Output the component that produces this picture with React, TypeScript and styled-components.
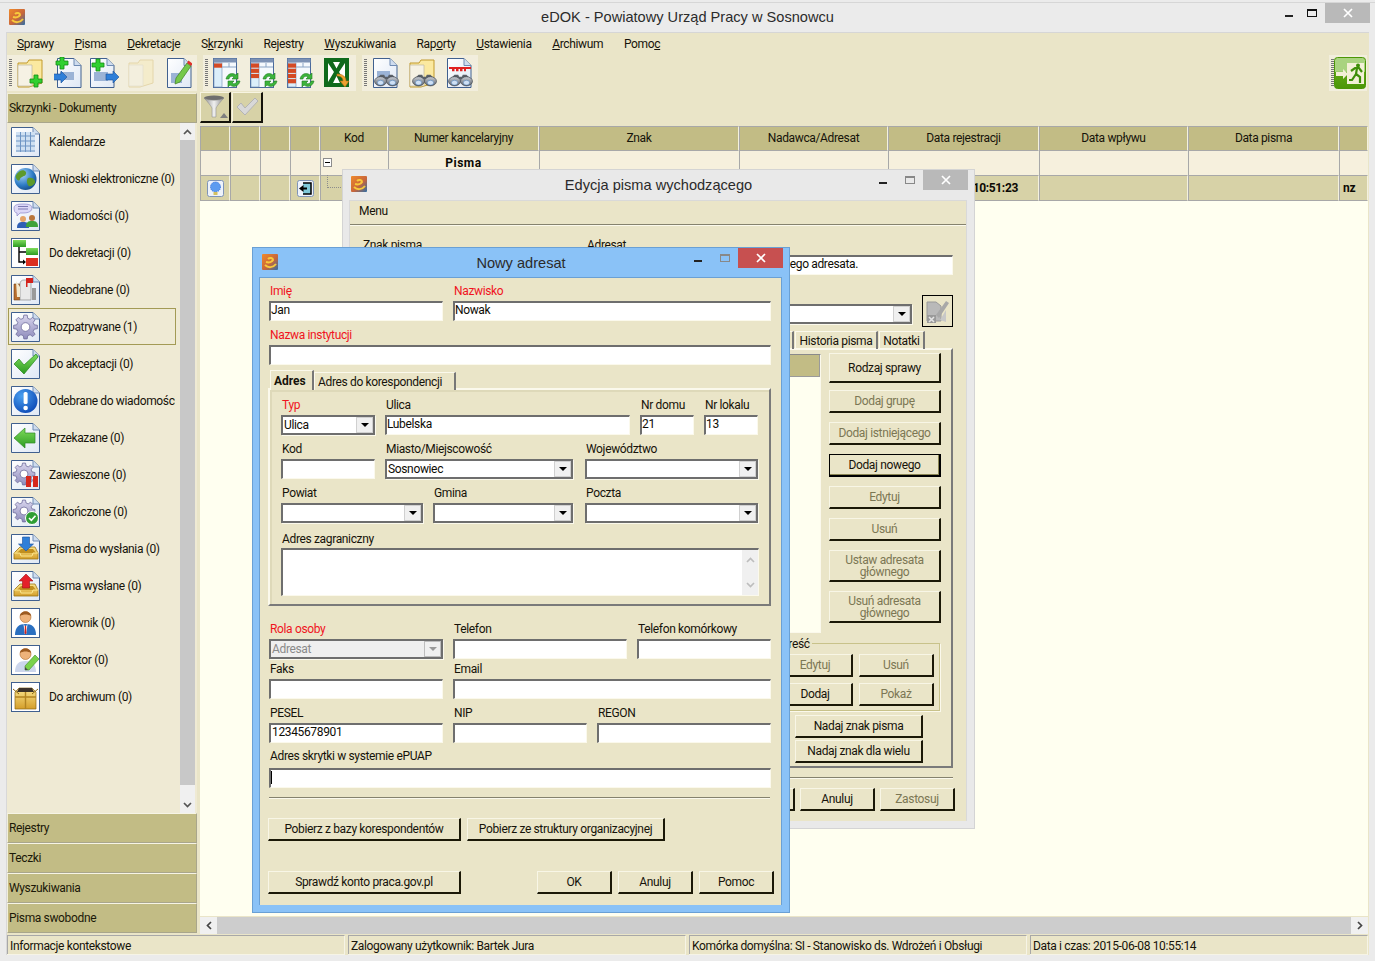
import React from "react";
import styled, { createGlobalStyle, css } from "styled-components";

const Global = createGlobalStyle`
  html, body { margin: 0; padding: 0; background: #ebebeb; overflow: hidden; }
  body { font-family: Roboto, "Liberation Sans", Arial, sans-serif; font-size: 12px; letter-spacing: -0.35px; color: #16130a; }
  * { box-sizing: border-box; }
`;

const gold = "#c2bc85";
const sand = "#eae5c8";

/* ---------- drawing helpers ---------- */
const gearPath = (cx: number, cy: number, R: number, r: number, n: number) => {
  let d = "";
  const st = (Math.PI * 2) / n;
  for (let i = 0; i < n; i++) {
    const a = i * st;
    const pts = [
      [r, a - st * 0.32], [R, a - st * 0.18], [R, a + st * 0.18], [r, a + st * 0.32],
    ];
    pts.forEach(([rad, an], j) => {
      const x = cx + rad * Math.cos(an);
      const y = cy + rad * Math.sin(an);
      d += `${i === 0 && j === 0 ? "M" : "L"}${x.toFixed(1)} ${y.toFixed(1)}`;
    });
  }
  return d + "Z";
};

const DefsSvg = styled.svg`
  position: absolute;
  width: 0;
  height: 0;
`;

const Defs = () => (
  <DefsSvg aria-hidden="true">
    <defs>
      <linearGradient id="pg" x1="0" y1="0" x2="1" y2="1"><stop offset="0" stopColor="#fff" /><stop offset="1" stopColor="#dfe8f5" /></linearGradient>
      <linearGradient id="logo" x1="0" y1="0" x2="1" y2="1"><stop offset="0" stopColor="#f08a2a" /><stop offset=".55" stopColor="#c9663a" /><stop offset="1" stopColor="#2d6ea8" /></linearGradient>
      <radialGradient id="globe" cx=".35" cy=".3" r=".8"><stop offset="0" stopColor="#a8d4f5" /><stop offset=".6" stopColor="#2e7cc6" /><stop offset="1" stopColor="#12457f" /></radialGradient>
      <linearGradient id="gear" x1="0" y1="0" x2="0" y2="1"><stop offset="0" stopColor="#d9d6ee" /><stop offset="1" stopColor="#8e8cbc" /></linearGradient>
      <linearGradient id="gr" x1="0" y1="0" x2="0" y2="1"><stop offset="0" stopColor="#7fdc5c" /><stop offset="1" stopColor="#2c9a22" /></linearGradient>
      <radialGradient id="blu" cx=".35" cy=".3" r=".8"><stop offset="0" stopColor="#4aa0f0" /><stop offset="1" stopColor="#0a46b4" /></radialGradient>
      <linearGradient id="yel" x1="0" y1="0" x2="0" y2="1"><stop offset="0" stopColor="#fbe58c" /><stop offset="1" stopColor="#d49e2a" /></linearGradient>
      <linearGradient id="bin" x1="0" y1="0" x2="0" y2="1"><stop offset="0" stopColor="#c9ced6" /><stop offset="1" stopColor="#5a6069" /></linearGradient>
      <linearGradient id="fun" x1="0" y1="0" x2="1" y2="0"><stop offset="0" stopColor="#8d8d8d" /><stop offset=".5" stopColor="#f0f0f0" /><stop offset="1" stopColor="#8a8a8a" /></linearGradient>
      <linearGradient id="exit" x1="0" y1="0" x2="0" y2="1"><stop offset="0" stopColor="#a9d37f" /><stop offset=".45" stopColor="#a9d37f" /><stop offset=".46" stopColor="#5fa814" /><stop offset="1" stopColor="#4c9606" /></linearGradient>
    </defs>
  </DefsSvg>
);

const Logo = () => (
  <svg width="16" height="16" viewBox="0 0 16 16">
    <rect width="16" height="16" rx="1" fill="url(#logo)" />
    <path d="M4 8c3 1 6 0 7-2 0-2-3-3-5-1M3 11c3 3 8 3 11-1" fill="none" stroke="#f7c93c" strokeWidth="2" />
  </svg>
);

const Frame30 = ({ children, plain }: { children?: React.ReactNode; plain?: boolean }) => (
  <svg width="30" height="30" viewBox="0 0 30 30">
    {plain ? (
      <rect x=".5" y=".5" width="28" height="29" fill="#fff" stroke="#40608f" />
    ) : (
      <>
        <path d="M.5.5H22L28.5 7V29.5H.5Z" fill="url(#pg)" stroke="#40608f" />
        <path d="M22 .5V7H28.5" fill="#cfdcee" stroke="#6f8bb3" />
      </>
    )}
    {children}
  </svg>
);

const Gear = ({ x = 14, y = 15, r = 11 }: { x?: number; y?: number; r?: number }) => (
  <>
    <path d={gearPath(x, y, r, r * 0.75, 8)} fill="url(#gear)" stroke="#6e6c9c" strokeWidth=".8" />
    <circle cx={x} cy={y} r={r * 0.36} fill="#fff" stroke="#6e6c9c" strokeWidth=".8" />
  </>
);
const Tray = () => (
  <>
    <path d="M3 19L9 13H24L27 19V25H3Z" fill="url(#yel)" stroke="#9a7414" strokeWidth=".8" />
    <path d="M6 19H25L22 15H10Z" fill="#c18f1f" />
    <path d="M3 19H9L10 22H21L22 19H27" fill="none" stroke="#fbe58c" />
  </>
);
const Person = ({ suit }: { suit: string }) => (
  <>
    <circle cx="14.5" cy="9" r="5.5" fill="#eeb27a" stroke="#b06c2e" strokeWidth=".6" />
    <path d="M9 8c0-6 11-6 11 0-3-2-8-2-11 0Z" fill="#9c5a20" />
    <path d="M4 27c0-8 4-11 10.5-11s10.5 3 10.5 11Z" fill={suit} />
  </>
);

const listIcons: React.ReactNode[] = [
  <Frame30><rect x="5" y="5" width="19" height="20" fill="#cfe0f2" /><path d="M5 9H24M5 14H24M5 19H24M5 24H24M9.5 5V25M14.5 5V25M19.5 5V25" stroke="#6f95c4" strokeWidth="1" /></Frame30>,
  <Frame30><circle cx="14.5" cy="15" r="11" fill="url(#globe)" /><path d="M9 7c3-2 7 0 6 3s-5 2-6 5-3 1-4-1 1-5 4-7ZM17 14c3-1 6 0 7 3s-4 6-6 5-3-6-1-8Z" fill="#5d9a2b" /></Frame30>,
  <Frame30><path d="M3 7c0-3 3-4 9-4s9 1 9 4-3 5-9 5l-3 0-3 3v-3c-2 0-3-2-3-5Z" fill="#dcd8f6" stroke="#8d88c8" strokeWidth=".7" /><path d="M7 5.5H17M7 8H17" stroke="#7d79b4" /><circle cx="12" cy="18" r="3" fill="#e4a468" /><path d="M6 27c0-5 2-6 6-6s6 1 6 6Z" fill="#2f5fb4" /><circle cx="21" cy="17" r="3" fill="#b9763c" /><path d="M15 26c0-5 2-6 6-6s6 1 6 6Z" fill="#3fa23a" /></Frame30>,
  <Frame30 plain><rect x="2" y="2" width="13" height="7" fill="url(#gr)" /><rect x="15" y="10" width="12" height="7" fill="url(#gr)" /><rect x="15" y="20" width="12" height="8" fill="#dc2f1f" /><path d="M8 9V24H14M8 14H15" stroke="#000" strokeWidth="1.4" fill="none" /><path d="M12 21.5L15 24L12 26.5Z" /></Frame30>,
  <Frame30><path d="M3 9H9V25H3Z" fill="#b86f2f" stroke="#70421a" strokeWidth=".6" /><path d="M9 9c0-3 2-4 4-4H20V25H9Z" fill="#e9e9e9" stroke="#8a8a8a" strokeWidth=".7" /><path d="M5 6L9 12V22H6Z" fill="#f3ead0" /><path d="M15 3H16.5V12H15ZM16.5 3H22V8H16.5Z" fill="#d4231c" /><rect x="21" y="13" width="4" height="12" fill="#9a9a9a" /></Frame30>,
  <Frame30><Gear x={14.5} y={15} r={12} /></Frame30>,
  <Frame30><path d="M3 15L8 10L13 16L25 5L27 8L13 25Z" fill="url(#gr)" stroke="#24861c" strokeWidth=".7" /></Frame30>,
  <Frame30><circle cx="14.5" cy="15" r="12" fill="url(#blu)" /><rect x="12.6" y="6" width="4" height="12" rx="1.6" fill="#fff" /><circle cx="14.6" cy="22" r="2.3" fill="#fff" /></Frame30>,
  <Frame30><path d="M3 15L14 5V10H24V20H14V25Z" fill="url(#gr)" stroke="#2f8a27" strokeWidth=".7" /></Frame30>,
  <Frame30><Gear x={13} y={14} r={11} /><rect x="15" y="16" width="5" height="11" fill="#d6281c" /><rect x="22" y="16" width="5" height="11" fill="#d6281c" /></Frame30>,
  <Frame30><Gear x={13} y={14} r={11} /><circle cx="21" cy="21" r="6.5" fill="#2f9e34" stroke="#fff" /><path d="M18 21L20.4 23.4L24.5 18.8" stroke="#fff" strokeWidth="1.6" fill="none" /></Frame30>,
  <Frame30><Tray /><path d="M15 17L7.5 10H11.5V3H18.5V10H22.5Z" fill="#2f7fd8" stroke="#1a4f98" strokeWidth=".6" /></Frame30>,
  <Frame30><Tray /><path d="M15 3L22 10H18.5V17H11.5V10H8Z" fill="#e4202a" stroke="#9c1016" strokeWidth=".6" /></Frame30>,
  <Frame30 plain><Person suit="#2a6fc0" /><path d="M12.5 16L14.5 19L16.5 16L15.3 26H13.7Z" fill="#fff" /><path d="M13.9 18H15.1L15.5 25L14.5 26.5L13.5 25Z" fill="#d2231c" /></Frame30>,
  <Frame30 plain><Person suit="#ccd6ec" /><path d="M14 25L14 21L24 10L28 14L18 25Z" fill="#7ad24c" stroke="#3f8a26" strokeWidth=".6" /><path d="M14 25L14 22L17 25Z" fill="#4a4a4a" /></Frame30>,
  <Frame30 plain><path d="M4 10L8 6H21L25 10V27H4Z" fill="url(#yel)" stroke="#8c6712" strokeWidth=".7" /><path d="M8 6H21L23 10H6Z" fill="#3c3228" /><path d="M14.5 10V27M4 15H25" stroke="#b28422" strokeWidth="1.4" /><path d="M2 7L8 12M27 7L21 12" stroke="#8c6712" strokeWidth="1" /></Frame30>,
];

const Doc24 = ({ x = 4 }: { x?: number }) => (
  <>
    <path d={`M${x}.5 1.5H${x + 17}L${x + 24} 8.5V30.5H${x}.5Z`} fill="url(#pg)" stroke="#40608f" />
    <path d={`M${x + 17} 1.5V8.5H${x + 24}`} fill="#cfdcee" stroke="#6f8bb3" />
  </>
);
const Plus = ({ x, y }: { x: number; y: number }) => (
  <path d={`M${x} ${y}h4v4h4v4h-4v4h-4v-4h-4v-4h4Z`} fill="#30d030" stroke="#158a15" strokeWidth=".8" />
);
const FolderI = ({ o = 1 }: { o?: number }) => (
  <g opacity={o}>
    <path d="M3 6H12L14 3H27V26L14 30H3Z" fill="#fbe9a0" stroke="#c29a2c" />
    <path d="M3 8H17V29H3Z" fill="#f6f2e4" stroke="#bdb8a0" strokeWidth=".7" />
  </g>
);
const Binoc = ({ x, y }: { x: number; y: number }) => (
  <g transform={`translate(${x} ${y}) scale(.92)`}>
    <path d="M1 7L6 2H10L11 4H14L15 2H19L24 7Z" fill="#5a6068" />
    <ellipse cx="6" cy="9" rx="6.5" ry="5" fill="url(#bin)" stroke="#3a3f46" strokeWidth=".7" />
    <ellipse cx="19" cy="9" rx="6.5" ry="5" fill="url(#bin)" stroke="#3a3f46" strokeWidth=".7" />
    <ellipse cx="6" cy="10.5" rx="3.4" ry="2.6" fill="#cfe0f4" stroke="#4d7fb8" strokeWidth=".6" />
    <ellipse cx="19" cy="10.5" rx="3.4" ry="2.6" fill="#cfe0f4" stroke="#4d7fb8" strokeWidth=".6" />
  </g>
);
const Refresh = () => (
  <g transform="translate(13 15)">
    <path d="M1 7C2 2 7 0 11 3L13 1V7H7L9 5C7 3.5 4.5 4.5 4 7Z" fill="#3cb43c" stroke="#1f7c1f" strokeWidth=".6" />
    <path d="M15 9C14 14 9 16 5 13L3 15V9H9L7 11C9 12.5 11.5 11.5 12 9Z" fill="#3cb43c" stroke="#1f7c1f" strokeWidth=".6" />
  </g>
);
const TableI = ({ rows }: { rows: number }) => (
  <>
    <rect x="1.5" y="1.5" width="23" height="29" fill="#f5f9fd" stroke="#4a6a9c" />
    <rect x="1.5" y="1.5" width="23" height="4" fill="#7d92b4" />
    <rect x="2" y="6" width="8" height="24" fill="#dbeefa" stroke="#6f8bb3" strokeWidth=".6" />
    <path d="M10 10H24M17 6V10" stroke="#8aa4c4" />
    {Array.from({ length: rows }).map((_, i) => (
      <rect key={i} x="2" y={6.5 + i * 5.2} width="8" height="4.2" fill="#d44a24" />
    ))}
  </>
);

const S = ({ w = 32, children }: { w?: number; children: React.ReactNode }) => (
  <svg width={w} height="32" viewBox={`0 0 ${w} 32`}>{children}</svg>
);

const Bar = {
  folderNew: <S><FolderI /><Plus x={19} y={18} /></S>,
  pageIn: <S w={28}><Doc24 x={3} /><rect x="6" y="15" width="14" height="8" fill="#9bb3d6" /><Plus x={6} y={0} /><path d="M0 15H8V12L14 18L8 24V21H0Z" fill="#2f7fd8" stroke="#1a4f98" strokeWidth=".6" transform="translate(-1 2)" /></S>,
  pageOut: <S w={30}><Doc24 x={0} /><rect x="4" y="15" width="14" height="9" fill="#9bb3d6" /><Plus x={6} y={2} /><path d="M15 15H22V12L28 18L22 24V21H15Z" fill="#2f7fd8" stroke="#1a4f98" strokeWidth=".6" transform="translate(1 2)" /></S>,
  folderOff: <S><FolderI o={0.28} /></S>,
  pagePen: <S w={26}><Doc24 x={1} /><rect x="5" y="16" width="11" height="10" fill="#9bb3d6" /><path d="M9 27L10 21L21 6L25 9L14 25Z" fill="#75c84a" stroke="#3e8024" strokeWidth=".7" /><path d="M21 6L22.5 3.5L26.5 6.5L25 9Z" fill="#e0322a" /></S>,
  t1: <S w={30}><TableI rows={1} /><Refresh /></S>,
  t2: <S w={30}><TableI rows={3} /><Refresh /></S>,
  t3: <S w={30}><TableI rows={4} /><Refresh /></S>,
  xls: (
    <S w={30}>
      <rect x="1" y="1" width="25" height="29" fill="#0f6a1c" />
      <rect x="5" y="5" width="17" height="21" fill="#fff" />
      <path d="M5 5H10L13.5 11.5L17 5H22V6L16 15L22 25V26H17L13.5 19L10 26H5V25L11 15L5 6Z" fill="#0f6a1c" />
      <path d="M14 17C20 17 23 20 23 24H26L22 30L17 24H20C20 21 18 19 14 19Z" fill="#f0a030" stroke="#b26e10" strokeWidth=".6" />
    </S>
  ),
  b1: <S w={28}><Doc24 x={1} /><rect x="5" y="14" width="13" height="6" fill="#9bb3d6" /><Binoc x={3} y={16} /></S>,
  b2: <S w={32}><FolderI /><Binoc x={6} y={16} /></S>,
  b3: (
    <S w={28}>
      <Doc24 x={1} />
      <rect x="3" y="10" width="22" height="2" fill="#e02020" />
      <path d="M6 13H20" stroke="#e02020" strokeWidth="2.5" strokeDasharray="2.5 1.5" />
      <Binoc x={3} y={16} />
    </S>
  ),
};

/* ---------- shell ---------- */
const Shell = styled.div`
  position: relative;
  width: 1375px;
  height: 961px;
  padding-top: 2px;
  background: #ebebeb;
  overflow: hidden;
  display: flex;
  flex-direction: column;
`;
const TopEdge = styled.div`height: 1px; background: #d6d6d6;`;

const TitleRow = styled.div<{ $h?: number }>`
  display: grid;
  grid-template-columns: 1fr auto 1fr;
  align-items: start;
  height: ${(p) => p.$h ?? 30}px;
  flex: none;
`;
const TitleIcon = styled.div<{ $x: number; $y: number }>`
  padding: ${(p) => p.$y}px 0 0 ${(p) => p.$x}px;
  height: 100%;
`;
const TitleText = styled.div<{ $y: number }>`
  padding-top: ${(p) => p.$y}px;
  font-family: "Liberation Sans", Arial, sans-serif;
  font-size: 14.6px;
  letter-spacing: 0;
  line-height: 18px;
  color: #2b2b2b;
  white-space: nowrap;
`;
const Controls = styled.div<{ $right: number }>`
  display: flex;
  justify-content: flex-end;
  padding-right: ${(p) => p.$right}px;
`;
const CtlBtn = styled.div<{ $w: number }>`
  width: ${(p) => p.$w}px;
  height: 20px;
  display: flex;
  align-items: center;
  justify-content: center;
`;
const CloseBtn = styled.div<{ $red?: boolean }>`
  width: 45px;
  height: 20px;
  background: ${(p) => (p.$red ? "#c75050" : "#b9b9b9")};
  display: flex;
  align-items: center;
  justify-content: center;
`;
const Ctl = ({ main, red }: { main?: boolean; red?: boolean }) => {
  const mx = main ? "#111" : "#888";
  return (
    <Controls $right={0}>
      <CtlBtn $w={main ? 20 : 28}>
        <svg width="10" height="10" viewBox="0 0 10 10"><rect x="1" y="7" width="8" height="2" fill="#222" /></svg>
      </CtlBtn>
      <CtlBtn $w={26}>
        <svg width="10" height="8" viewBox="0 0 10 8"><rect x=".5" y=".5" width="9" height="7" fill="none" stroke={mx} /><rect x="0" y="0" width="10" height="2" fill={mx} /></svg>
      </CtlBtn>
      <CloseBtn $red={red}>
        <svg width="10" height="10" viewBox="0 0 10 10"><path d="M1 1L9 9M9 1L1 9" stroke="#fff" strokeWidth="1.7" /></svg>
      </CloseBtn>
    </Controls>
  );
};

const Main = styled.div`
  flex: 1;
  margin: 0 6px 6px 6px;
  display: flex;
  flex-direction: column;
  background: ${sand};
  border-top: 1px solid #d6d6d6;
  border-left: 1px solid #d8d8d8;
  min-height: 0;
`;
const Menu = styled.div`
  height: 21px;
  display: flex;
  align-items: center;
  gap: 20.7px;
  padding-left: 10px;
  flex: none;
`;
const MenuItem = styled.span`
  color: #16130a;
  white-space: nowrap;
`;
const Tools = styled.div`
  height: 37px;
  display: flex;
  gap: 6px;
  flex: none;
  padding: 1px 2px 0 0;
`;
const ToolGroup = styled.div<{ $w: number }>`
  display: flex;
  align-items: center;
  height: 36px;
  padding-left: 2px;
  background: #f2eedd;
  width: ${(p) => p.$w}px;
`;
const ToolSlot = styled.div`
  width: 37px;
  display: flex;
  justify-content: center;
  flex: none;
`;
const Handle = styled.div`
  width: 3px;
  height: 28px;
  flex: none;
  background: repeating-linear-gradient(to bottom, #777 0 1px, transparent 1px 2px);
`;
const ToolSpacer = styled.div`flex: 1;`;

const Body = styled.div`
  flex: 1;
  display: flex;
  min-height: 0;
`;
const Left = styled.div`
  width: 190px;
  flex: none;
  display: flex;
  flex-direction: column;
  padding-top: 2px;
`;
const Right = styled.div`
  flex: 1;
  min-width: 0;
  margin-left: 3px;
  margin-right: 1px;
  display: flex;
  flex-direction: column;
  background: ${sand};
`;
const PanelHead = styled.div`
  height: 30px;
  flex: none;
  background: ${gold};
  border: 1px solid #a9a68c;
  border-top-color: #f1eed9;
  border-left-color: #f1eed9;
  display: flex;
  align-items: center;
  padding-left: 1px;
  color: #1b1808;
`;
const ListWrap = styled.div`
  height: 690px;
  flex: none;
  display: flex;
  background: #efead4;
`;
const List = styled.div`
  flex: 1;
  min-width: 0;
  padding-left: 1px;
`;
const Item = styled.div<{ $sel?: boolean }>`
  width: 168px;
  height: 37px;
  padding-left: 2px;
  display: flex;
  align-items: center;
  gap: 8px;
  border: 1px solid ${(p) => (p.$sel ? "#a39a55" : "transparent")};
  overflow: hidden;
  white-space: nowrap;
  svg { flex: none; }
`;
const VScroll = styled.div`
  width: 15px;
  margin-right: 2px;
  flex: none;
  display: flex;
  flex-direction: column;
  background: #f0f0f0;
`;
const ScrollBtn = styled.div`
  height: 17px;
  background: #f0f0f0;
  display: flex;
  align-items: center;
  justify-content: center;
  flex: none;
`;
const VThumb = styled.div`
  height: 645px;
  background: #c8c8c8;
`;
const VFill = styled.div`flex: 1;`;
const Accordion = styled.div`
  height: 30px;
  flex: none;
  background: ${gold};
  border: 1px solid #a9a68c;
  border-top-color: #f6f4e6;
  border-left-color: #f1eed9;
  display: flex;
  align-items: center;
  padding-left: 1px;
  color: #1b1808;
`;

const FilterBar = styled.div`
  height: 32px;
  flex: none;
  display: flex;
  gap: 1px;
  padding-top: 1px;
`;
const FilterBtn = styled.div`
  width: 31px;
  height: 31px;
  background: #d7d2a7;
  border-top: 1px solid #f7f4e1;
  border-left: 1px solid #f7f4e1;
  border-right: 2px solid #14120a;
  border-bottom: 2px solid #14120a;
  display: flex;
  align-items: center;
  justify-content: center;
`;
const cols = "30px 30px 30px 30px 68px 151px 200px 149px 151px 149px 151px 29px";
const GridHead = styled.div`
  margin-top: 3px;
  display: grid;
  grid-template-columns: ${cols};
  height: 25px;
  flex: none;
`;
const HCell = styled.div`
  background: ${gold};
  border-top: 1px solid #a8a8a8;
  border-left: 1px solid #a8a8a8;
  border-right: 1px solid #f4f1df;
  border-bottom: 1px solid #a8a8a8;
  padding-bottom: 1px;
  display: flex;
  align-items: center;
  justify-content: center;
  color: #15130a;
`;
const GridRow = styled.div<{ $alt?: boolean }>`
  display: grid;
  grid-template-columns: ${cols};
  height: 25px;
  flex: none;
  background: ${(p) => (p.$alt ? "#d7d2a7" : "#f6f0dd")};
`;
const Cell = styled.div<{ $align?: string }>`
  position: relative;
  border-right: 1px solid #f4f1df;
  border-left: 1px solid #a8a8a8;
  border-bottom: 1px solid #a8a8a8;
  display: flex;
  align-items: center;
  justify-content: ${(p) => p.$align ?? "center"};
  font-weight: 700;
  color: #0c0a04;
  padding: 0 3px;
  white-space: nowrap;
`;
const WideBold = styled.span`letter-spacing: .5px;`;
const ExpBox = styled.div`
  position: absolute;
  left: 2px;
  top: 7px;
  width: 9px;
  height: 9px;
  background: #fff;
  border: 1px solid #8c8c8c;
  &::after { content: ""; position: absolute; left: 1px; top: 3px; width: 5px; height: 1px; background: #000; }
`;
const TreeLine = styled.div`
  position: absolute;
  left: 6px;
  top: -1px;
  width: 14px;
  height: 13px;
  border-left: 1px dotted #8c8c8c;
  border-bottom: 1px dotted #8c8c8c;
`;
const GridFill = styled.div`
  flex: 1;
  background: #fffff0;
`;
const HScroll = styled.div`
  height: 17px;
  flex: none;
  display: flex;
  margin-top: 1px;
  background: #f0f0f0;
`;
const HBtn = styled.div`
  width: 17px;
  display: flex;
  align-items: center;
  justify-content: center;
  flex: none;
`;
const HTrack = styled.div`
  flex: 1;
  background: #cdcdcd;
`;

const Status = styled.div`
  display: grid;
  grid-template-columns: 338px 338px 338px 338px;
  column-gap: 3px;
  height: 20px;
  flex: none;
  margin-top: 1px;
`;
const StatusCell = styled.div`
  background: ${sand};
  border-top: 1px solid #a8a8a8;
  border-left: 1px solid #a8a8a8;
  border-right: 1px solid #f6f4e6;
  padding: 2px 3px 0 2px;
  line-height: 17px;
  height: 26px;
  white-space: nowrap;
  overflow: hidden;
`;
const StatusClip = styled.div`
  overflow: hidden;
  height: 20px;
  border-bottom: 1px solid #f6f4e6;
`;

/* ---------- windows ---------- */
const Win = styled.div<{ $x: number; $y: number; $w: number; $h: number; $bg: string; $bd: string }>`
  position: absolute;
  left: ${(p) => p.$x}px;
  top: ${(p) => p.$y}px;
  width: ${(p) => p.$w}px;
  height: ${(p) => p.$h}px;
  background: ${(p) => p.$bg};
  border: 1px solid ${(p) => p.$bd};
  display: flex;
  flex-direction: column;
`;
const Client = styled.div<{ $bd: string }>`
  flex: 1;
  margin: 0 7px 7px 6px;
  background: ${sand};
  border: 1px solid ${(p) => p.$bd};
  border-bottom: 0;
  display: flex;
  flex-direction: column;
  min-height: 0;
  overflow: hidden;
`;

const MenuStrip = styled.div`
  height: 24px;
  flex: none;
  display: flex;
  align-items: center;
  padding: 0 0 3px 9px;
  border-bottom: 1px solid #85826e;
  box-shadow: 0 1px 0 #fbf9ec;
`;
const FieldsGrid = styled.div`
  display: grid;
  grid-template-columns: 224px 1fr;
  padding: 13px 13px 0 12px;
`;
const EdRow = styled.div`
  display: grid;
  grid-template-columns: 1fr 31px;
  column-gap: 10px;
  padding: 20px 13px 0 12px;
`;
const ComboSlot = styled.div`padding-top: 9px;`;
const IconBtn = styled.div`
  width: 31px;
  height: 32px;
  border: 1px solid #000;
  display: flex;
  align-items: center;
  justify-content: center;
`;
const EdTabs = styled.div`
  display: flex;
  justify-content: flex-end;
  padding: 4px 41px 0 12px;
  height: 21px;
  flex: none;
  position: relative;
`;
const SmallTab = styled.div<{ $w: number }>`
  width: ${(p) => p.$w}px;
  height: 18px;
  margin-left: 1px;
  border-top: 1px solid #fbf9ec;
  border-left: 1px solid #fbf9ec;
  border-right: 2px solid #777;
  display: flex;
  align-items: center;
  justify-content: center;
  white-space: nowrap;
`;
const EdPanel = styled.div`
  margin: 0 13px 0 12px;
  height: 420px;
  flex: none;
  border-top: 2px solid #fbf9ec;
  border-left: 2px solid #fbf9ec;
  border-right: 2px solid #7a7a7a;
  border-bottom: 2px solid #7a7a7a;
  padding: 3px 10px 0 10px;
  display: flex;
  flex-direction: column;
`;
const EdTop = styled.div`
  display: grid;
  grid-template-columns: 1fr 112px;
  column-gap: 8px;
  height: 280px;
  flex: none;
`;
const EdList = styled.div`
  margin-top: 1px;
  height: 279px;
  background: #fffff0;
  border: 1px solid #fbf9ec;
  border-top: 1px solid #8a8a8a;
  display: flex;
  flex-direction: column;
`;
const EdListHead = styled.div`
  height: 22px;
  background: ${gold};
  border-bottom: 1px solid #9a9a9a;
  border-right: 1px solid #9a9a9a;
`;
const EdBtns = styled.div`
  display: flex;
  flex-direction: column;
  gap: 9px;
`;
const GroupRow = styled.div`
  margin-top: 10px;
  display: flex;
  justify-content: flex-end;
  padding-right: 1px;
`;
const GroupBox = styled.div`
  position: relative;
  width: 210px;
  height: 68px;
  border: 1px solid #c8c28a;
  box-shadow: 1px 1px 0 #fbf9ec;
  padding: 10px 5px 0 0;
  display: grid;
  grid-template-columns: 75px 75px;
  justify-content: end;
  column-gap: 6px;
  row-gap: 6px;
  align-content: start;
`;
const Legend = styled.span`
  position: absolute;
  left: 49px;
  top: -7px;
  padding: 0 2px;
  line-height: 14px;
  background: ${sand};
`;
const NadajCol = styled.div`
  margin-top: 4px;
  margin-left: auto;
  margin-right: 18px;
  width: 128px;
  display: flex;
  flex-direction: column;
  gap: 2px;
`;
const SepLine = styled.div<{ $mt: number }>`
  margin-top: ${(p) => p.$mt}px;
  height: 2px;
  flex: none;
  border-top: 1px solid #85826e;
  border-bottom: 1px solid #fbf9ec;
`;
const EdSep = styled(SepLine)`
  margin-right: 13px;
`;
const EdFooter = styled.div`
  display: flex;
  justify-content: flex-end;
  gap: 5px;
  padding: 9px 11px 0 0;
`;

const Btn = styled.div<{ $off?: boolean; $h?: number; $w?: number; $focus?: boolean; $mb?: number }>`
  height: ${(p) => p.$h ?? 23}px;
  flex: none;
  ${(p) => p.$mb !== undefined && css`margin-bottom: ${p.$mb}px;`}
  ${(p) => p.$w && css`width: ${p.$w}px;`}
  background: ${sand};
  border-top: 1px solid #f8f6e6;
  border-left: 1px solid #f8f6e6;
  border-right: 2px solid #1b1807;
  border-bottom: 2px solid #1b1807;
  ${(p) => p.$focus && css`
    border: 1px solid #000;
    border-right: 2px solid #000;
    border-bottom: 2px solid #000;
    box-shadow: inset -1px -1px 0 #8b8654;
  `}
  color: ${(p) => (p.$off ? "#7c7754" : "#16130a")};
  display: flex;
  align-items: center;
  justify-content: center;
  text-align: center;
  line-height: 12px;
  white-space: pre-line;
`;

/* ---------- form parts ---------- */
const FormRow = styled.div<{ $cols: string; $mt: number; $gap?: number }>`
  display: grid;
  grid-template-columns: ${(p) => p.$cols};
  column-gap: ${(p) => p.$gap ?? 10}px;
  margin-top: ${(p) => p.$mt}px;
  flex: none;
`;
const Field = styled.div<{ $ml?: number }>`
  display: flex;
  flex-direction: column;
  min-width: 0;
  margin-left: ${(p) => p.$ml ?? 0}px;
`;
const Label = styled.label<{ $red?: boolean; $h?: number }>`
  height: ${(p) => p.$h ?? 17}px;
  line-height: 14px;
  padding-left: 1px;
  color: ${(p) => (p.$red ? "#f0141e" : "#16130a")};
  white-space: nowrap;
`;
const Input = styled.input<{ $pl?: number }>`
  display: block;
  width: 100%;
  height: 20px;
  border-top: 2px solid #6e6e6e;
  border-left: 2px solid #6e6e6e;
  border-right: 1px solid #fbf9ec;
  border-bottom: 1px solid #fbf9ec;
  background: #fff;
  font: inherit;
  letter-spacing: inherit;
  line-height: 14px;
  color: #0e0c05;
  padding: 0 0 3px ${(p) => p.$pl ?? 0}px;
  margin: 0;
  outline: none;
  border-radius: 0;
`;
const Caret = styled.div`
  position: absolute;
  left: 2px;
  top: 3px;
  width: 1px;
  height: 13px;
  background: #000;
`;
const InputWrap = styled.div`position: relative;`;
const ComboBox = styled.div<{ $off?: boolean }>`
  height: 20px;
  display: flex;
  align-items: center;
  border: 2px solid #6e6e6e;
  box-shadow: 1px 1px 0 #fbf9ec;
  background: ${(p) => (p.$off ? "#efefef" : "#fff")};
  color: ${(p) => (p.$off ? "#8a8a8a" : "#0e0c05")};
  padding-left: 1px;
  padding-bottom: 1px;
  overflow: hidden;
  white-space: nowrap;
`;
const ComboText = styled.span`flex: 1;`;
const ComboArrow = styled.div<{ $off?: boolean }>`
  width: 17px;
  height: 16px;
  flex: none;
  margin-bottom: -1px;
  background: #f0f0f0;
  border: 1px solid ${(p) => (p.$off ? "#bdbdbd" : "#d0d0d0")};
  display: flex;
  align-items: center;
  justify-content: center;
  &::after {
    content: "";
    border-top: 4px solid ${(p) => (p.$off ? "#9a9a9a" : "#000")};
    border-left: 4px solid transparent;
    border-right: 4px solid transparent;
  }
`;
const Combo = ({ value, off }: { value?: string; off?: boolean }) => (
  <ComboBox $off={off}>
    <ComboText>{value}</ComboText>
    <ComboArrow $off={off} />
  </ComboBox>
);
const TextBoxArea = styled.div`
  height: 48px;
  border-top: 2px solid #6e6e6e;
  border-left: 2px solid #6e6e6e;
  border-right: 1px solid #fbf9ec;
  border-bottom: 1px solid #fbf9ec;
  background: #fff;
  display: flex;
  justify-content: flex-end;
`;
const AreaScroll = styled.div`
  width: 16px;
  background: #f0f0f0;
  display: flex;
  flex-direction: column;
  justify-content: space-between;
  align-items: center;
  padding: 7px 0;
`;
const Form = styled.div`
  display: flex;
  flex-direction: column;
  padding: 6px 11px 0 9px;
`;
const TabBar = styled.div`
  display: flex;
  margin-top: 5px;
  height: 20px;
  padding-left: 1px;
  position: relative;
  z-index: 1;
  margin-bottom: -2px;
  flex: none;
`;
const MainTab = styled.div<{ $active?: boolean; $w: number }>`
  width: ${(p) => p.$w}px;
  height: 20px;
  display: flex;
  align-items: center;
  padding-left: 3px;
  background: ${sand};
  border-top: 1px solid #fbf9ec;
  border-left: 1px solid #fbf9ec;
  border-right: 2px solid #777;
  font-weight: ${(p) => (p.$active ? 700 : 400)};
  letter-spacing: ${(p) => (p.$active ? "0" : "-0.35px")};
  white-space: nowrap;
  ${(p) => !p.$active && css`height: 18px; margin-top: 2px;`}
`;
const TabPanel = styled.div`
  height: 218px;
  flex: none;
  margin-left: -1px;
  margin-right: -1px;
  border-top: 2px solid #fbf9ec;
  border-left: 2px solid #fbf9ec;
  border-right: 2px solid #7a7a7a;
  border-bottom: 2px solid #7a7a7a;
  box-shadow: inset 2px 2px 0 #ded9b9;
  padding: 8px 11px 0 11px;
  display: flex;
  flex-direction: column;
`;
const ButtonRow = styled.div<{ $mt: number }>`
  display: flex;
  margin-top: ${(p) => p.$mt}px;
  margin-left: -1px;
  flex: none;
`;
const Push = styled.div<{ $w: number }>`width: ${(p) => p.$w}px; flex: none;`;

const ChevUp = ({ c = "#555" }: { c?: string }) => (
  <svg width="9" height="6" viewBox="0 0 9 6"><path d="M1 5L4.5 1.5L8 5" fill="none" stroke={c} strokeWidth="1.7" /></svg>
);
const ChevDown = ({ c = "#555" }: { c?: string }) => (
  <svg width="9" height="6" viewBox="0 0 9 6"><path d="M1 1L4.5 4.5L8 1" fill="none" stroke={c} strokeWidth="1.7" /></svg>
);
const ChevH = ({ right }: { right?: boolean }) => (
  <svg width="6" height="9" viewBox="0 0 6 9"><path d={right ? "M1 1L4.5 4.5L1 8" : "M5 1L1.5 4.5L5 8"} fill="none" stroke="#444" strokeWidth="1.7" /></svg>
);

const items = [
  "Kalendarze", "Wnioski elektroniczne (0)", "Wiadomości (0)", "Do dekretacji (0)", "Nieodebrane (0)",
  "Rozpatrywane (1)", "Do akceptacji (0)", "Odebrane do wiadomości (0)", "Przekazane (0)", "Zawieszone (0)",
  "Zakończone (0)", "Pisma do wysłania (0)", "Pisma wysłane (0)", "Kierownik (0)", "Korektor (0)", "Do archiwum (0)",
];
const headers = ["", "", "", "", "Kod", "Numer kancelaryjny", "Znak", "Nadawca/Adresat", "Data rejestracji", "Data wpływu", "Data pisma", ""];

export default function App() {
  return (
    <Shell>
      <Global />
      <Defs />
      <TopEdge />
      <TitleRow $h={29}>
        <TitleIcon $x={9} $y={6}><Logo /></TitleIcon>
        <TitleText $y={5}>eDOK - Powiatowy Urząd Pracy w Sosnowcu</TitleText>
        <Controls $right={5}><Ctl main /></Controls>
      </TitleRow>
      <Main>
        <Menu>
          <MenuItem><u>S</u>prawy</MenuItem>
          <MenuItem><u>P</u>isma</MenuItem>
          <MenuItem><u>D</u>ekretacje</MenuItem>
          <MenuItem>S<u>k</u>rzynki</MenuItem>
          <MenuItem>Re<u>j</u>estry</MenuItem>
          <MenuItem><u>W</u>yszukiwania</MenuItem>
          <MenuItem>Rap<u>o</u>rty</MenuItem>
          <MenuItem><u>U</u>stawienia</MenuItem>
          <MenuItem><u>A</u>rchiwum</MenuItem>
          <MenuItem>Pomo<u>c</u></MenuItem>
        </Menu>
        <Tools>
          <ToolGroup $w={190}>
            <Handle />
            {[Bar.folderNew, Bar.pageIn, Bar.pageOut, Bar.folderOff, Bar.pagePen].map((ic, i) => <ToolSlot key={i}>{ic}</ToolSlot>)}
          </ToolGroup>
          <ToolGroup $w={153}>
            <Handle />
            {[Bar.t1, Bar.t2, Bar.t3, Bar.xls].map((ic, i) => <ToolSlot key={i}>{ic}</ToolSlot>)}
          </ToolGroup>
          <ToolGroup $w={116}>
            <Handle />
            {[Bar.b1, Bar.b2, Bar.b3].map((ic, i) => <ToolSlot key={i}>{ic}</ToolSlot>)}
          </ToolGroup>
          <ToolSpacer />
          <ToolGroup $w={38}>
            <Handle />
            <svg width="32" height="32" viewBox="0 0 32 32">
              <rect x=".5" y=".5" width="31" height="31" rx="3" fill="url(#exit)" stroke="#4c9606" />
              <rect x="13" y="6" width="17" height="21" fill="#f3f0d6" />
              <path d="M2 15H9V12L14 17L9 22V19H2Z" fill="#f3f0d6" />
              <circle cx="24" cy="8.5" r="2" fill="#3e8e08" />
              <path d="M17 14L21 11H25L28 15M23 11L22 17L26 20L26 26M22 17L18 23H15" fill="none" stroke="#3e8e08" strokeWidth="2.2" />
            </svg>
          </ToolGroup>
        </Tools>
        <Body>
          <Left>
            <PanelHead>Skrzynki - Dokumenty</PanelHead>
            <ListWrap>
              <List>
                {items.map((t, i) => (
                  <Item key={t} $sel={i === 5}>{listIcons[i]}<span>{t}</span></Item>
                ))}
              </List>
              <VScroll>
                <ScrollBtn><ChevUp /></ScrollBtn>
                <VThumb />
                <VFill />
                <ScrollBtn><ChevDown /></ScrollBtn>
              </VScroll>
            </ListWrap>
            <Accordion>Rejestry</Accordion>
            <Accordion>Teczki</Accordion>
            <Accordion>Wyszukiwania</Accordion>
            <Accordion>Pisma swobodne</Accordion>
          </Left>
          <Right>
            <FilterBar>
              <FilterBtn>
                <svg width="26" height="26" viewBox="0 0 26 26">
                  <ellipse cx="12" cy="4" rx="10" ry="2.5" fill="#6e6e6e" />
                  <path d="M2 4C5 7 9 12 10 14V23H14V14C15 12 19 7 22 4C18 7 6 7 2 4Z" fill="url(#fun)" stroke="#8a8a8a" strokeWidth=".5" />
                  <path d="M18 24L22 19L26 24Z" fill="#7f7f7f" />
                </svg>
              </FilterBtn>
              <FilterBtn>
                <svg width="26" height="26" viewBox="0 0 26 26">
                  <path d="M3 13L7 9L11 14L21 4L24 7L11 21Z" fill="#d8d8d8" stroke="#b4b4b4" />
                </svg>
              </FilterBtn>
            </FilterBar>
            <GridHead>
              {headers.map((h, i) => <HCell key={i}>{h}</HCell>)}
            </GridHead>
            <GridRow>
              {headers.map((_, i) => (
                <Cell key={i}>
                  {i === 4 && <ExpBox />}
                  {i === 5 && <WideBold>Pisma</WideBold>}
                </Cell>
              ))}
            </GridRow>
            <GridRow $alt>
              {headers.map((_, i) => (
                <Cell key={i} $align={i === 11 ? "flex-start" : "center"}>
                  {i === 0 && (
                    <svg width="17" height="17" viewBox="0 0 17 17">
                      <rect x=".5" y=".5" width="16" height="16" rx="2" fill="#eef3fb" stroke="#7f94b8" />
                      <circle cx="8.5" cy="7" r="5" fill="#5c9bf0" stroke="#2f6cd8" strokeDasharray="1 1" />
                      <rect x="6.5" y="12" width="4" height="3" fill="#d4c060" />
                    </svg>
                  )}
                  {i === 3 && (
                    <svg width="17" height="17" viewBox="0 0 17 17">
                      <rect x=".5" y=".5" width="16" height="16" rx="2" fill="#eef3fb" stroke="#7f94b8" />
                      <path d="M6 3H14V14H6" fill="#7fc8d8" stroke="#000" strokeWidth="1.5" />
                      <path d="M2 8.5L6.5 5V7.5H10V9.5H6.5V12Z" />
                    </svg>
                  )}
                  {i === 4 && <TreeLine />}
                  {i === 8 && "2015-06-08 10:51:23"}
                  {i === 11 && "nz"}
                </Cell>
              ))}
            </GridRow>
            <GridFill />
            <HScroll>
              <HBtn><ChevH /></HBtn>
              <HTrack />
              <HBtn><ChevH right /></HBtn>
            </HScroll>
          </Right>
        </Body>
        <Status>
          <StatusClip><StatusCell>Informacje kontekstowe</StatusCell></StatusClip>
          <StatusClip><StatusCell>Zalogowany użytkownik: Bartek Jura</StatusCell></StatusClip>
          <StatusClip><StatusCell>Komórka domyślna: SI - Stanowisko ds. Wdrożeń i Obsługi<br />Systemów</StatusCell></StatusClip>
          <StatusClip><StatusCell>Data i czas: 2015-06-08 10:55:14</StatusCell></StatusClip>
        </Status>
      </Main>

      <Win $x={342} $y={169} $w={633} $h={660} $bg="#e9e9e9" $bd="#d4d4d4">
        <TitleRow>
          <TitleIcon $x={8} $y={6}><Logo /></TitleIcon>
          <TitleText $y={6}>Edycja pisma wychodzącego</TitleText>
          <Controls $right={6}><Ctl /></Controls>
        </TitleRow>
        <Client $bd="#d9d9d9">
          <MenuStrip>Menu</MenuStrip>
          <FieldsGrid>
            <Field><Label>Znak pisma</Label><Input readOnly /></Field>
            <Field><Label>Adresat</Label><Input readOnly $pl={98} defaultValue="Nie wskazano głównego adresata." /></Field>
          </FieldsGrid>
          <EdRow>
            <ComboSlot><Combo /></ComboSlot>
            <IconBtn>
              <svg width="27" height="27" viewBox="0 0 27 27">
                <path d="M3 4H12L17 8V23H3Z" fill="#b9b9b9" stroke="#9a9a9a" />
                <path d="M12 17L22 3L25 5L15 20Z" fill="#a8a8a8" />
                <rect x="3" y="17" width="9" height="8" fill="#9a9a9a" />
                <path d="M5 19L10 24M10 19L5 24" stroke="#e4e4e4" strokeWidth="1.6" />
                <path d="M16 22L22 12V24Z" fill="#c8c8c8" />
              </svg>
            </IconBtn>
          </EdRow>
          <EdTabs>
            <SmallTab $w={60}>Adresaci</SmallTab>
            <SmallTab $w={83}>Historia pisma</SmallTab>
            <SmallTab $w={46}>Notatki</SmallTab>
          </EdTabs>
          <EdPanel>
            <EdTop>
              <EdList><EdListHead /></EdList>
              <EdBtns>
                <Btn $h={30} $mb={-2}>Rodzaj sprawy</Btn>
                <Btn $off>Dodaj grupę</Btn>
                <Btn $off>Dodaj istniejącego</Btn>
                <Btn $focus>Dodaj nowego</Btn>
                <Btn $off>Edytuj</Btn>
                <Btn $off>Usuń</Btn>
                <Btn $off $h={32}>{"Ustaw adresata\ngłównego"}</Btn>
                <Btn $off $h={32}>{"Usuń adresata\ngłównego"}</Btn>
              </EdBtns>
            </EdTop>
            <GroupRow>
              <GroupBox>
                <Legend>Treść</Legend>
                <Btn $off>Edytuj</Btn>
                <Btn $off>Usuń</Btn>
                <Btn>Dodaj</Btn>
                <Btn $off>Pokaż</Btn>
              </GroupBox>
            </GroupRow>
            <NadajCol>
              <Btn>Nadaj znak pisma</Btn>
              <Btn>Nadaj znak dla wielu</Btn>
            </NadajCol>
          </EdPanel>
          <EdSep $mt={9} />
          <EdFooter>
            <Btn $w={75}>OK</Btn>
            <Btn $w={75}>Anuluj</Btn>
            <Btn $w={75} $off>Zastosuj</Btn>
          </EdFooter>
        </Client>
      </Win>

      <Win $x={252} $y={247} $w={538} $h={666} $bg="#8ac2f7" $bd="#6aa0d4">
        <TitleRow $h={29}>
          <TitleIcon $x={9} $y={6}><Logo /></TitleIcon>
          <TitleText $y={6}>Nowy adresat</TitleText>
          <Controls $right={6}><Ctl red /></Controls>
        </TitleRow>
        <Client $bd="#6aa0d4">
          <Form>
            <FormRow $cols="174px 318px" $mt={0}>
              <Field><Label $red>Imię</Label><Input readOnly defaultValue="Jan" /></Field>
              <Field><Label $red>Nazwisko</Label><Input readOnly defaultValue="Nowak" /></Field>
            </FormRow>
            <FormRow $cols="502px" $mt={7}>
              <Field><Label $red>Nazwa instytucji</Label><Input readOnly /></Field>
            </FormRow>
            <TabBar>
              <MainTab $active $w={44}>Adres</MainTab>
              <MainTab $w={142}>Adres do korespondencji</MainTab>
            </TabBar>
            <TabPanel>
              <FormRow $cols="94px 1fr 54px 54px" $mt={0}>
                <Field><Label $red>Typ</Label><Combo value="Ulica" /></Field>
                <Field><Label>Ulica</Label><Input readOnly defaultValue="Lubelska" /></Field>
                <Field><Label>Nr domu</Label><Input readOnly defaultValue="21" /></Field>
                <Field><Label>Nr lokalu</Label><Input readOnly defaultValue="13" /></Field>
              </FormRow>
              <FormRow $cols="94px 188px 175px" $mt={7}>
                <Field><Label>Kod</Label><Input readOnly /></Field>
                <Field><Label>Miasto/Miejscowość</Label><Combo value="Sosnowiec" /></Field>
                <Field $ml={2}><Label>Województwo</Label><Combo /></Field>
              </FormRow>
              <FormRow $cols="142px 140px 175px" $mt={7}>
                <Field><Label>Powiat</Label><Combo /></Field>
                <Field><Label>Gmina</Label><Combo /></Field>
                <Field $ml={2}><Label>Poczta</Label><Combo /></Field>
              </FormRow>
              <FormRow $cols="478px" $mt={9}>
                <Field>
                  <Label $h={16}>Adres zagraniczny</Label>
                  <TextBoxArea>
                    <AreaScroll><ChevUp c="#bdbdbd" /><ChevDown c="#bdbdbd" /></AreaScroll>
                  </TextBoxArea>
                </Field>
              </FormRow>
            </TabPanel>
            <FormRow $cols="174px 174px 134px" $mt={16}>
              <Field><Label $red>Rola osoby</Label><Combo value="Adresat" off /></Field>
              <Field><Label>Telefon</Label><Input readOnly /></Field>
              <Field><Label>Telefon komórkowy</Label><Input readOnly /></Field>
            </FormRow>
            <FormRow $cols="174px 318px" $mt={3}>
              <Field><Label>Faks</Label><Input readOnly /></Field>
              <Field><Label>Email</Label><Input readOnly /></Field>
            </FormRow>
            <FormRow $cols="174px 134px 174px" $mt={7}>
              <Field><Label>PESEL</Label><Input readOnly $pl={1} defaultValue="12345678901" /></Field>
              <Field><Label>NIP</Label><Input readOnly /></Field>
              <Field><Label>REGON</Label><Input readOnly /></Field>
            </FormRow>
            <FormRow $cols="502px" $mt={6}>
              <Field>
                <Label $h={19}>Adres skrytki w systemie ePUAP</Label>
                <InputWrap><Input readOnly /><Caret /></InputWrap>
              </Field>
            </FormRow>
            <SepLine $mt={9} />
            <ButtonRow $mt={19}>
              <Btn $w={193}>Pobierz z bazy korespondentów</Btn>
              <Push $w={6} />
              <Btn $w={198}>Pobierz ze struktury organizacyjnej</Btn>
            </ButtonRow>
            <ButtonRow $mt={30}>
              <Btn $w={193}>Sprawdź konto praca.gov.pl</Btn>
              <Push $w={76} />
              <Btn $w={75}>OK</Btn>
              <Push $w={6} />
              <Btn $w={75}>Anuluj</Btn>
              <Push $w={6} />
              <Btn $w={75}>Pomoc</Btn>
            </ButtonRow>
          </Form>
        </Client>
      </Win>
    </Shell>
  );
}
